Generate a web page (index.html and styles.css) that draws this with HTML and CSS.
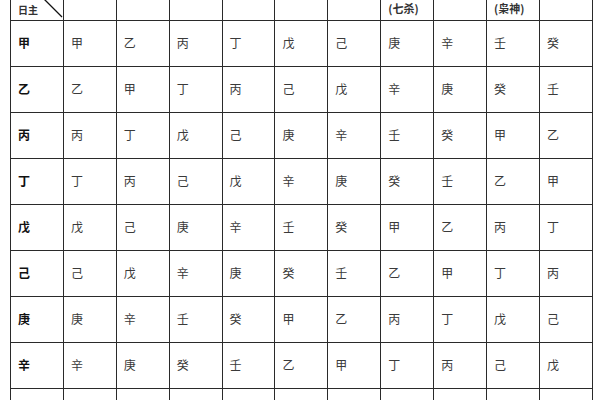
FILE: index.html
```html
<!DOCTYPE html>
<html lang="zh">
<head>
<meta charset="utf-8">
<link rel="stylesheet" href="styles.css">
</head>
<body>
<table class="grid">
  <colgroup>
    <col><col><col><col><col><col><col><col><col><col><col>
  </colgroup>
  <tr class="head">
    <th class="corner"><span class="rz">日主</span><svg class="diag" width="20" height="19" viewBox="0 0 20 19"><line x1="1" y1="-1" x2="19" y2="17" stroke="#111" stroke-width="1.3"/></svg></th>
    <th></th><th></th><th></th><th></th><th></th><th></th>
    <th>(七杀)</th><th></th><th>(枭神)</th><th></th>
  </tr>
  <tr><td class="dm">甲</td><td>甲</td><td>乙</td><td>丙</td><td>丁</td><td>戊</td><td>己</td><td>庚</td><td>辛</td><td>壬</td><td>癸</td></tr>
  <tr><td class="dm">乙</td><td>乙</td><td>甲</td><td>丁</td><td>丙</td><td>己</td><td>戊</td><td>辛</td><td>庚</td><td>癸</td><td>壬</td></tr>
  <tr><td class="dm">丙</td><td>丙</td><td>丁</td><td>戊</td><td>己</td><td>庚</td><td>辛</td><td>壬</td><td>癸</td><td>甲</td><td>乙</td></tr>
  <tr><td class="dm">丁</td><td>丁</td><td>丙</td><td>己</td><td>戊</td><td>辛</td><td>庚</td><td>癸</td><td>壬</td><td>乙</td><td>甲</td></tr>
  <tr><td class="dm">戊</td><td>戊</td><td>己</td><td>庚</td><td>辛</td><td>壬</td><td>癸</td><td>甲</td><td>乙</td><td>丙</td><td>丁</td></tr>
  <tr><td class="dm">己</td><td>己</td><td>戊</td><td>辛</td><td>庚</td><td>癸</td><td>壬</td><td>乙</td><td>甲</td><td>丁</td><td>丙</td></tr>
  <tr><td class="dm">庚</td><td>庚</td><td>辛</td><td>壬</td><td>癸</td><td>甲</td><td>乙</td><td>丙</td><td>丁</td><td>戊</td><td>己</td></tr>
  <tr><td class="dm">辛</td><td>辛</td><td>庚</td><td>癸</td><td>壬</td><td>乙</td><td>甲</td><td>丁</td><td>丙</td><td>己</td><td>戊</td></tr>
  <tr><td class="dm">壬</td><td>壬</td><td>癸</td><td>甲</td><td>乙</td><td>丙</td><td>丁</td><td>戊</td><td>己</td><td>庚</td><td>辛</td></tr>
</table>
</body>
</html>
```
FILE: styles.css
```css
html, body {
  margin: 0;
  padding: 0;
  background: #fff;
  overflow: hidden;
}
body {
  padding-left: 10px;
  font-family: "Noto Sans CJK SC", "Noto Sans", sans-serif;
  color: #3a3a3a;
}
.grid {
  border-collapse: collapse;
  table-layout: fixed;
  width: 582px;
}
.grid col {
  width: 52.9px;
}
.grid th,
.grid td {
  border: 1.4px solid #2a2a2a;
  padding: 0 0 0 7px;
  text-align: left;
  vertical-align: middle;
  box-sizing: border-box;
}
.head th {
  border-top: none;
  height: 20px;
  font-size: 11px;
  font-weight: 700;
  color: #333;
  line-height: 1;
  vertical-align: top;
  padding-top: 3px;
}
.corner {
  position: relative;
}
.rz {
  font-size: 10px;
  display: inline-block;
  margin-top: 2px;
}
.diag {
  position: absolute;
  right: 0;
  top: 0;
}
.grid td {
  height: 46px;
  font-size: 12px;
  line-height: 1;
}
.grid td.dm {
  font-weight: 700;
  color: #111;
  font-size: 12px;
}
```
